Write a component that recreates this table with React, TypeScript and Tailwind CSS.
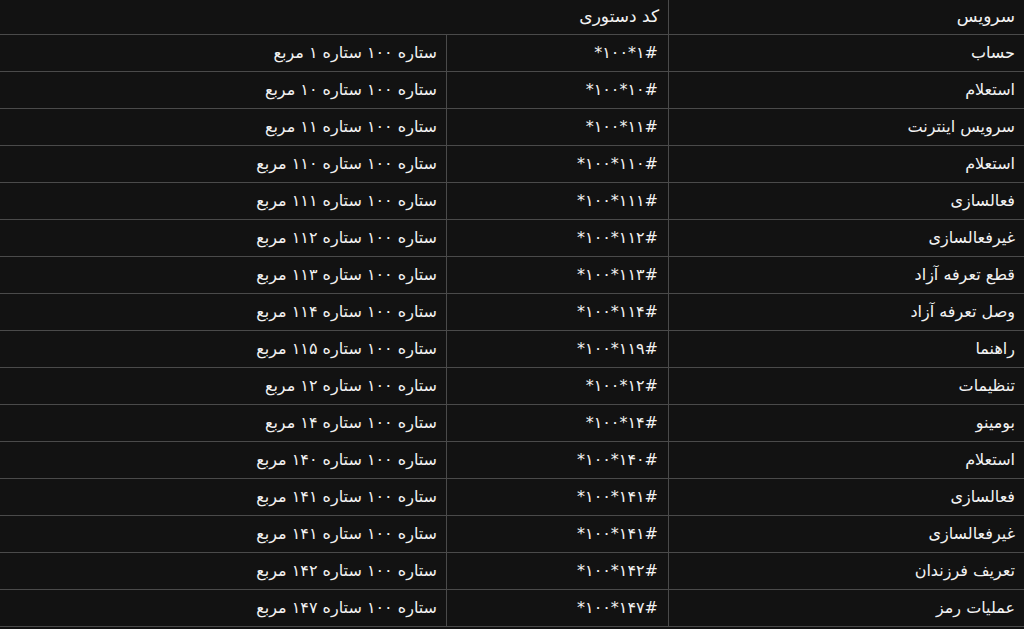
import React from "react";

const rows: [string, string, string][] = [
  ["حساب", "*۱۰۰*۱#", "ستاره ۱۰۰ ستاره ۱ مربع"],
  ["استعلام", "*۱۰۰*۱۰#", "ستاره ۱۰۰ ستاره ۱۰ مربع"],
  ["سرویس اینترنت", "*۱۰۰*۱۱#", "ستاره ۱۰۰ ستاره ۱۱ مربع"],
  ["استعلام", "*۱۰۰*۱۱۰#", "ستاره ۱۰۰ ستاره ۱۱۰ مربع"],
  ["فعالسازی", "*۱۰۰*۱۱۱#", "ستاره ۱۰۰ ستاره ۱۱۱ مربع"],
  ["غیرفعالسازی", "*۱۰۰*۱۱۲#", "ستاره ۱۰۰ ستاره ۱۱۲ مربع"],
  ["قطع تعرفه آزاد", "*۱۰۰*۱۱۳#", "ستاره ۱۰۰ ستاره ۱۱۳ مربع"],
  ["وصل تعرفه آزاد", "*۱۰۰*۱۱۴#", "ستاره ۱۰۰ ستاره ۱۱۴ مربع"],
  ["راهنما", "*۱۰۰*۱۱۹#", "ستاره ۱۰۰ ستاره ۱۱۵ مربع"],
  ["تنظیمات", "*۱۰۰*۱۲#", "ستاره ۱۰۰ ستاره ۱۲ مربع"],
  ["بومینو", "*۱۰۰*۱۴#", "ستاره ۱۰۰ ستاره ۱۴ مربع"],
  ["استعلام", "*۱۰۰*۱۴۰#", "ستاره ۱۰۰ ستاره ۱۴۰ مربع"],
  ["فعالسازی", "*۱۰۰*۱۴۱#", "ستاره ۱۰۰ ستاره ۱۴۱ مربع"],
  ["غیرفعالسازی", "*۱۰۰*۱۴۱#", "ستاره ۱۰۰ ستاره ۱۴۱ مربع"],
  ["تعریف فرزندان", "*۱۰۰*۱۴۲#", "ستاره ۱۰۰ ستاره ۱۴۲ مربع"],
  ["عملیات رمز", "*۱۰۰*۱۴۷#", "ستاره ۱۰۰ ستاره ۱۴۷ مربع"],
];

export default function App() {
  return (
    <div
      dir="rtl"
      className="w-[1024px] h-[629px] overflow-hidden bg-[#121212] text-[#f2f2f2] text-[16px] font-['DejaVu_Sans',sans-serif]"
    >
      <div className="grid grid-cols-[356px_222px_1fr] h-[35px] border-b border-[#4a4a4a]">
        <div className="flex items-center pr-[9px] border-l border-[#4a4a4a] text-[17px]">سرویس</div>
        <div className="col-span-2 flex items-center pr-[9px] text-[17px]">کد دستوری</div>
      </div>
      {rows.map(([s, c, d], i) => (
        <div key={i} className="grid grid-cols-[356px_222px_1fr] h-[37px] border-b border-[#4a4a4a]">
          <div className="flex items-center pr-[9px] border-l border-[#4a4a4a]">{s}</div>
          <div className="flex items-center pr-[10px] border-l border-[#4a4a4a]">
            <span dir="ltr" className="[unicode-bidi:isolate]">{c}</span>
          </div>
          <div className="flex items-center pr-[9px]">{d}</div>
        </div>
      ))}
    </div>
  );
}
